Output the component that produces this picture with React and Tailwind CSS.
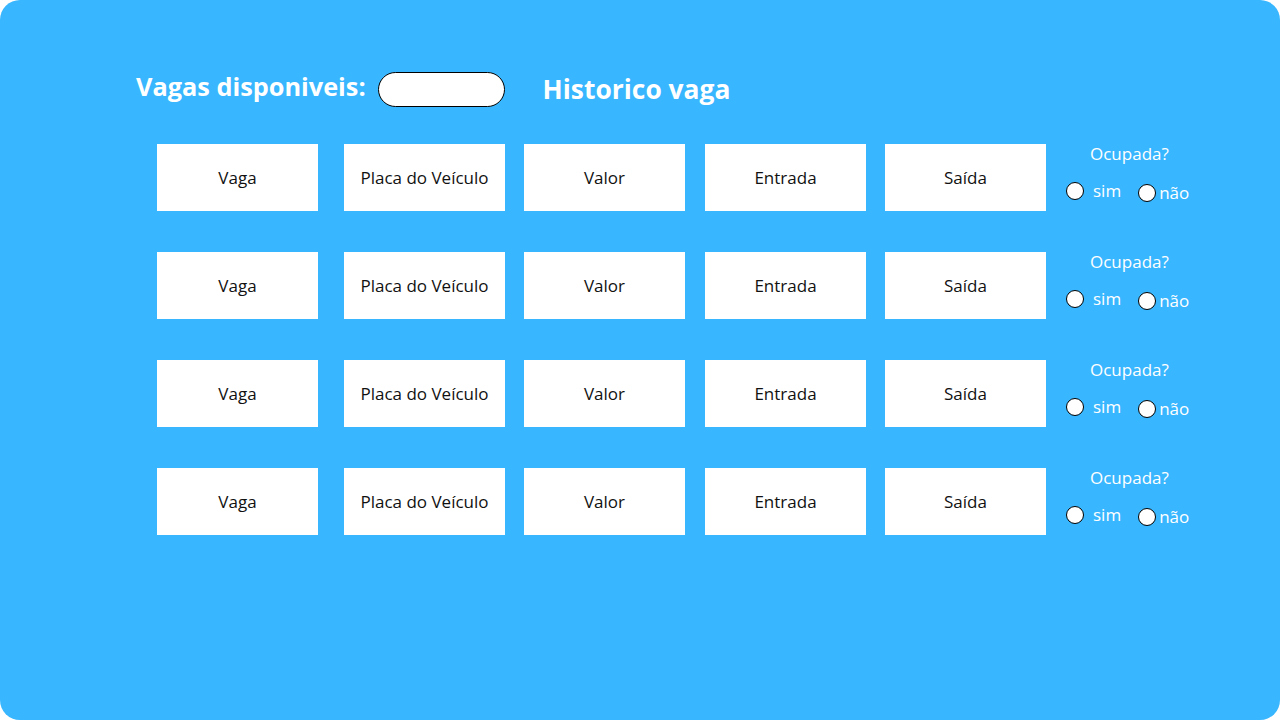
const font = { fontFamily: '"Open Sans", "Liberation Sans", sans-serif' };

const COLS = ['Vaga', 'Placa do Veículo', 'Valor', 'Entrada', 'Saída'];
// left margin before each box (gaps as in the mockup)
const GAPS = ['ml-0', 'ml-[26px]', 'ml-[19px]', 'ml-[20px]', 'ml-[19px]'];

function Radio({ className = '' }) {
  return <span className={"block h-[18px] w-[18px] rounded-full border border-black bg-white " + className} />;
}

function Row() {
  return (
    <div className="flex items-start">
      {COLS.map((label, i) => (
        <div
          key={label}
          className={"flex h-[67px] w-[161px] items-center justify-center bg-white text-[17px] text-[#111]" + " " + GAPS[i]}
        >
          {label}
        </div>
      ))}

      {/* Ocupada? */}
      <div className="ml-[20px] -mt-[2px] flex flex-col text-white">
        <span className="ml-[24px] text-[17px] leading-[24px]">Ocupada?</span>
        <div className="mt-[13px] flex items-start">
          <label className="flex items-center">
            <Radio />
            <span className="ml-[9px] text-[17px] leading-[24px]">sim</span>
          </label>
          <label className="ml-[17px] mt-[2px] flex items-center">
            <Radio />
            <span className="ml-[3px] text-[17px] leading-[24px]">não</span>
          </label>
        </div>
      </div>
    </div>
  );
}

export default function App() {
  return (
    <div className="h-[720px] w-[1280px] bg-white" style={font}>
      <div className="h-full w-full rounded-[20px] bg-[#38b6ff]">
        {/* header */}
        <div className="flex items-start pl-[136px] pt-[68px]">
          <h1 className="text-[25.3px] font-bold leading-[36px] text-white">Vagas disponiveis:</h1>
          <div className="ml-[12px] mt-[4px] h-[35px] w-[127px] rounded-full border border-black bg-white" />
          <h2 className="ml-[38px] mt-[3px] text-[26.4px] font-bold leading-[36px] text-white">Historico vaga</h2>
        </div>

        {/* rows */}
        <div className="mt-[37px] flex flex-col gap-[41px] pl-[157px]">
          <Row />
          <Row />
          <Row />
          <Row />
        </div>
      </div>
    </div>
  );
}
